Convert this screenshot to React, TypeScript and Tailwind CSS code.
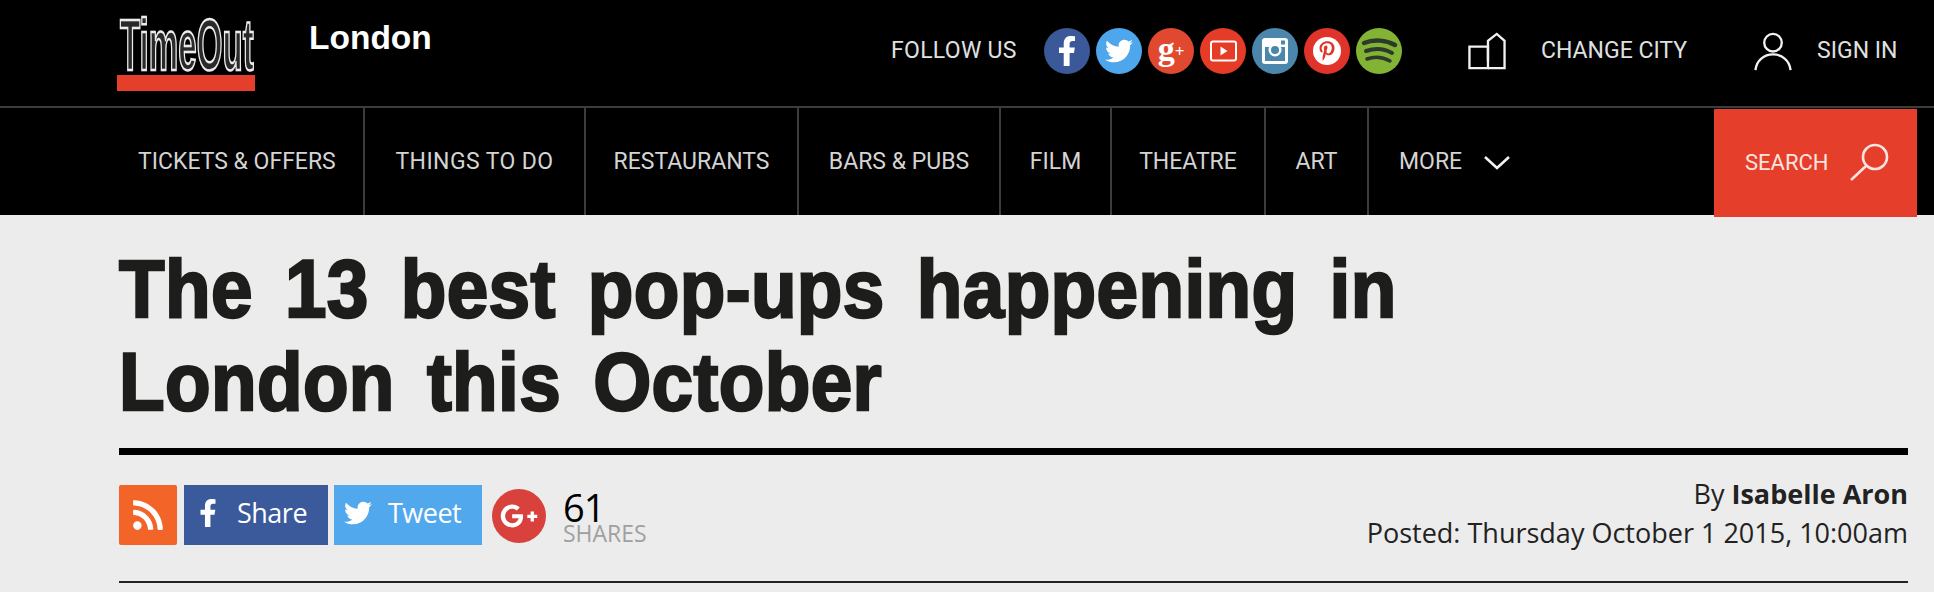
import { FaFacebookF, FaTwitter, FaPinterestP, FaRss, FaGooglePlusG } from 'react-icons/fa'

const navItems = [
  { label: 'TICKETS & OFFERS', width: 'w-[365px] pl-[138px]' },
  { label: 'THINGS TO DO', width: 'w-[221px] justify-center tracking-[0.4px]' },
  { label: 'RESTAURANTS', width: 'w-[213px] justify-center' },
  { label: 'BARS & PUBS', width: 'w-[202px] justify-center' },
  { label: 'FILM', width: 'w-[111px] justify-center' },
  { label: 'THEATRE', width: 'w-[154px] justify-center' },
  { label: 'ART', width: 'w-[103px] justify-center' },
]

function TimeOutLogo() {
  return (
    <div className="flex w-[138px] flex-col">
      <svg viewBox="0 0 138 56" className="h-[56px] w-[138px] overflow-visible">
        <text
          transform="translate(3 53) scale(0.46 1)"
          fontFamily="Liberation Sans"
          fontWeight="700"
          fontSize="72"
          fill="#2a2a2a"
          stroke="#ececec"
          strokeWidth="2"
          vectorEffect="non-scaling-stroke"
        >
          TimeOut
        </text>
      </svg>
      <div className="mt-[2px] h-[16px] bg-[#e53e2b]" />
    </div>
  )
}

function YoutubeIcon() {
  return (
    <svg viewBox="0 0 28 22" className="h-[22px] w-[29px]" fill="none" stroke="white" strokeWidth="2">
      <rect x="1.5" y="1.5" width="25" height="19" rx="2" />
      <path d="M11 6.5 18 11 11 15.5Z" fill="white" stroke="none" />
    </svg>
  )
}

function InstagramIcon() {
  return (
    <svg viewBox="0 0 28 28" className="h-[28px] w-[28px]">
      <rect x="1" y="1" width="26" height="26" rx="3" fill="white" />
      <rect x="4" y="10" width="20" height="14" fill="#4b86ad" />
      <circle cx="14" cy="13" r="6.5" fill="white" />
      <circle cx="14" cy="13" r="4" fill="#4b86ad" />
      <rect x="20" y="3.5" width="4" height="4" fill="#4b86ad" />
    </svg>
  )
}

function SpotifyIcon() {
  return (
    <svg viewBox="0 0 46 46" className="h-[46px] w-[46px]" fill="none" stroke="#2d3a2b" strokeLinecap="round">
      <path d="M8 15C18 11 30 12 39 17" strokeWidth="4.5" />
      <path d="M10 23C19 20 29 21 36 25" strokeWidth="4" />
      <path d="M11 31C19 28 27 29 34 33" strokeWidth="3.5" />
    </svg>
  )
}

function HomeIcon() {
  return (
    <svg viewBox="0 0 40 40" className="h-[39px] w-[40px]" fill="none" stroke="#f2f2f2" strokeWidth="2.4">
      <path d="M2 15H21V37H2Z" />
      <path d="M21 37H38V9L30 2 21 9V30" />
    </svg>
  )
}

function UserIcon() {
  return (
    <svg viewBox="0 0 40 40" className="h-[39px] w-[40px]" fill="none" stroke="#f2f2f2" strokeWidth="2.4">
      <circle cx="20" cy="11" r="9" />
      <path d="M2 39C3 29 11 23 20 23S37 29 38 39" />
    </svg>
  )
}

function Circle({ color, children }: { color: string; children: React.ReactNode }) {
  return <div className={`flex h-[46px] w-[46px] items-center justify-center rounded-full ${color}`}>{children}</div>
}

export default function App() {
  return (
    <div className="h-[592px] w-[1934px] overflow-hidden bg-[#ececec] font-['Open_Sans',sans-serif]">
      <header className="flex h-[106px] items-start bg-black pl-[117px] text-[#e0e0e0]">
        <div className="pt-[17px]">
          <TimeOutLogo />
        </div>
        <div className="ml-[54px] w-[123px] pt-[19px] font-['Liberation_Sans',sans-serif] text-[33.5px] leading-[38px] font-bold text-white">
          London
        </div>
        <div className="ml-[459px] flex items-center pt-[28px] font-['Roboto',sans-serif] text-[23px]">
          <span className="w-[153px] leading-[46px] tracking-[0.3px]">FOLLOW US</span>
          <div className="flex gap-[6px]">
            <Circle color="bg-[#3b5998]">
              <FaFacebookF className="h-[30px] w-[30px] text-white" />
            </Circle>
            <Circle color="bg-[#4ea6ec]">
              <FaTwitter className="h-[28px] w-[28px] text-white" />
            </Circle>
            <Circle color="bg-[#e0492f]">
              <span className="font-['Liberation_Serif',serif] text-[34px] leading-[40px] font-bold text-white">
                g<span className="align-middle text-[17px]">+</span>
              </span>
            </Circle>
            <Circle color="bg-[#e53b27]">
              <YoutubeIcon />
            </Circle>
            <Circle color="bg-[#4b86ad]">
              <InstagramIcon />
            </Circle>
            <Circle color="bg-[#e0342b]">
              <div className="flex h-[28px] w-[28px] items-center justify-center rounded-full bg-white">
                <FaPinterestP className="h-[20px] w-[20px] text-[#e0342b]" />
              </div>
            </Circle>
            <Circle color="bg-[#82b335]">
              <SpotifyIcon />
            </Circle>
          </div>
          <div className="ml-[65px] flex items-center">
            <HomeIcon />
            <span className="ml-[34px]">CHANGE CITY</span>
          </div>
          <div className="ml-[66px] flex items-center">
            <UserIcon />
            <span className="ml-[24px]">SIGN IN</span>
          </div>
        </div>
      </header>

      <nav className="flex h-[109px] items-stretch border-t-2 border-[#3c3c3c] bg-black text-[#d4d4d4]">
        <div className="flex flex-1 items-stretch font-['Roboto',sans-serif] text-[23px]">
          {navItems.map((item) => (
            <div key={item.label} className={`flex items-center border-r-2 border-[#3c3c3c] pt-[2px] ${item.width}`}>
              {item.label}
            </div>
          ))}
          <div className="flex items-center gap-[22px] pt-[2px] pl-[30px]">
            MORE
            <svg viewBox="0 0 26 14" className="h-[14px] w-[26px]" fill="none" stroke="#f2f2f2" strokeWidth="2.6">
              <path d="M1 1 13 12 25 1" />
            </svg>
          </div>
        </div>
        <div className="mt-[1px] mr-[17px] flex h-[108px] w-[203px] items-center self-start bg-[#e53e2b] pb-[2px] pl-[31px] font-['Roboto',sans-serif] text-[22px] text-[#fbe4df]">
          SEARCH
          <svg viewBox="0 0 40 38" className="ml-[20px] h-[38px] w-[40px]" fill="none" stroke="#fbe4df" strokeWidth="2.6">
            <circle cx="26" cy="14" r="12" />
            <path d="M17 23 2 37" />
          </svg>
        </div>
      </nav>

      <main className="pr-[26px] pl-[119px]">
        <h1 className="origin-left scale-x-[0.91] pt-[27px] font-['Liberation_Sans',sans-serif] text-[82px] leading-[93px] font-bold tracking-[0.43px] whitespace-nowrap text-[#1d1d1b] [word-spacing:12px] [-webkit-text-stroke:2.5px_#1d1d1b]">
          The 13 best pop-ups happening in
          <br />
          London this October
        </h1>
        <div className="mt-[20px] h-[7px] bg-black" />
        <div className="flex h-[128px] justify-between border-b-2 border-[#222] pt-[30px]">
          <div className="flex items-start">
            <div className="flex h-[60px] w-[58px] items-center justify-center rounded-[2px] bg-[#f26428]">
              <FaRss className="h-[34px] w-[34px] text-white" />
            </div>
            <div className="ml-[7px] flex h-[60px] w-[144px] items-center bg-[#3b5a9b] pb-[4px] pl-[14px] text-[27px] tracking-[-0.5px] text-white">
              <FaFacebookF className="h-[28px] w-[20px]" />
              <span className="ml-[19px]">Share</span>
            </div>
            <div className="ml-[6px] flex h-[60px] w-[148px] items-center bg-[#52a8ed] pb-[4px] pl-[10px] text-[27px] tracking-[-0.5px] text-white">
              <FaTwitter className="h-[28px] w-[28px]" />
              <span className="ml-[16px]">Tweet</span>
            </div>
            <div className="mt-[4px] ml-[10px] flex h-[54px] w-[54px] items-center justify-center rounded-full bg-[#d9413c]">
              <FaGooglePlusG className="h-[38px] w-[38px] text-white" />
            </div>
            <div className="mt-[6px] ml-[17px] flex flex-col">
              <span className="text-[38px] leading-[32px] tracking-[-1px] text-black">61</span>
              <span className="text-[23px] leading-[20px] text-[#a0a0a0]">SHARES</span>
            </div>
          </div>
          <div className="-mt-[11px] text-right text-[27px] leading-[39px] text-[#222]">
            <div>
              By <span className="font-bold">Isabelle Aron</span>
            </div>
            <div>Posted: Thursday October 1 2015, 10:00am</div>
          </div>
        </div>
      </main>
    </div>
  )
}
